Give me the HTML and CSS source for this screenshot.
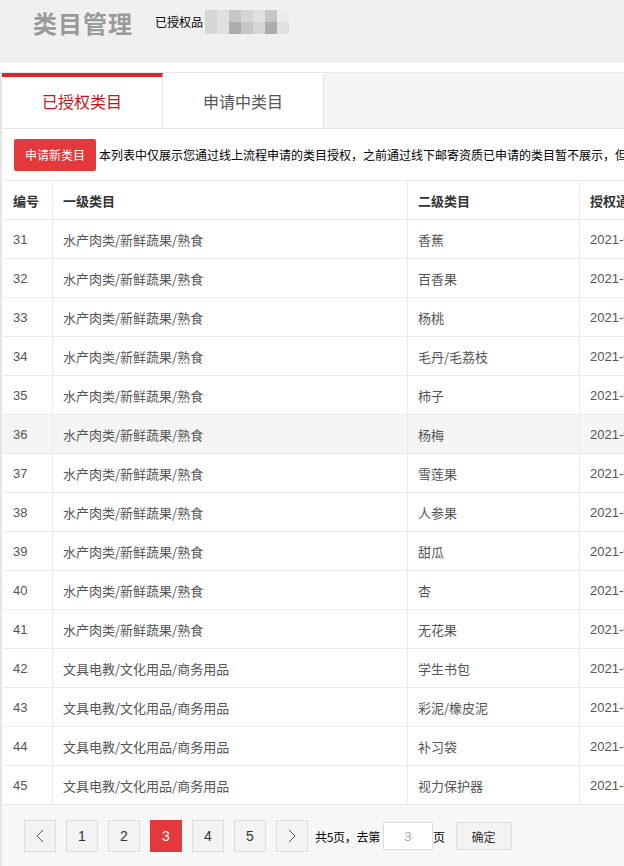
FILE: index.html
```html
<!DOCTYPE html>
<html lang="zh-CN">
<head>
    <meta charset="UTF-8">
    <title>类目管理</title>
    <link rel="stylesheet" href="styles.css">
</head>
<body>
    <div class="top-bar">
        <h1>类目管理</h1>
        <span class="crumb">已授权品</span>
        <span class="mosaic">
            <i class="m2"></i><i class="m1"></i><i class="m3"></i><i class="m2"></i><i class="m1"></i><i class="m3"></i><i class="m0"></i>
            <i class="m2"></i><i class="m1"></i><i class="m4"></i><i class="m3"></i><i class="m2"></i><i class="m4"></i><i class="m1"></i>
        </span>
    </div>

    <div class="panel">
        <ul class="tabs">
            <li class="tab active">已授权类目</li>
            <li class="tab">申请中类目</li>
        </ul>

        <div class="toolbar">
            <button class="btn-red">申请新类目</button>
            <span class="notice">本列表中仅展示您通过线上流程申请的类目授权，之前通过线下邮寄资质已申请的类目暂不展示，但不影响您的正常经营</span>
        </div>

        <div class="table-wrap">
            <table class="cat-table">
                <thead>
                    <tr>
                        <th class="col-no">编号</th>
                        <th class="col-one">一级类目</th>
                        <th class="col-two">二级类目</th>
                        <th class="col-date">授权通过时间</th>
                    </tr>
                </thead>
                <tbody id="rows"></tbody>
            </table>
        </div>

        <div class="pager">
            <button class="pg"><svg width="8" height="14" viewBox="0 0 8 14"><path d="M7 1 1 7l6 6" fill="none" stroke="#555" stroke-width="1"/></svg></button>
            <button class="pg">1</button>
            <button class="pg">2</button>
            <button class="pg current">3</button>
            <button class="pg">4</button>
            <button class="pg">5</button>
            <button class="pg"><svg width="8" height="14" viewBox="0 0 8 14"><path d="M1 1l6 6-6 6" fill="none" stroke="#555" stroke-width="1"/></svg></button>
            <span class="pg-text">共5页，去第</span>
            <input class="pg-input" type="text" value="3">
            <span class="pg-text">页</span>
            <button class="pg-ok">确定</button>
        </div>
    </div>

    <script>
        const fresh = '水产肉类/新鲜蔬果/熟食';
        const office = '文具电教/文化用品/商务用品';
        const data = [
            [31, fresh, '香蕉'], [32, fresh, '百香果'], [33, fresh, '杨桃'],
            [34, fresh, '毛丹/毛荔枝'], [35, fresh, '柿子'], [36, fresh, '杨梅'],
            [37, fresh, '雪莲果'], [38, fresh, '人参果'], [39, fresh, '甜瓜'],
            [40, fresh, '杏'], [41, fresh, '无花果'], [42, office, '学生书包'],
            [43, office, '彩泥/橡皮泥'], [44, office, '补习袋'], [45, office, '视力保护器']
        ];
        const tbody = document.getElementById('rows');
        data.forEach(function (d) {
            const tr = document.createElement('tr');
            if (d[0] === 36) tr.className = 'hover';
            tr.innerHTML = '<td class="num">' + d[0] + '</td><td>' + d[1] + '</td><td>' + d[2] +
                '</td><td class="num">2021-03-15 10:24:36</td>';
            tbody.appendChild(tr);
        });
    </script>
</body>
</html>
```

FILE: styles.css
```css
body {
    margin: 0;
    background: #fff;
    font-family: "Noto Sans CJK SC", "Liberation Sans", sans-serif;
    color: #333;
    overflow: hidden;
}
.top-bar {
    height: 61px;
    background: #f0f0f0;
    border-bottom: 1px solid #e6e6e6;
    display: flex;
    align-items: center;
    padding-left: 33px;
    margin-bottom: 10px;
}
.top-bar h1 {
    margin: 0 22px 0 0;
    font-size: 24px;
    font-weight: bold;
    color: #9a9a9a;
    letter-spacing: 1px;
    position: relative;
    top: -8px;
}
.crumb {
    font-size: 12px;
    color: #000;
    position: relative;
    top: -9px;
}
.mosaic {
    display: grid;
    grid-template-columns: repeat(7, 12px);
    grid-auto-rows: 12px;
    position: relative;
    top: -9px;
    margin-left: 2px;
}
.mosaic i { display: block; }
.m0 { background: #ececec; }
.m1 { background: #e0e0e0; }
.m2 { background: #d6d6d6; }
.m3 { background: #c6c6c6; }
.m4 { background: #acacac; }

.panel {
    border-left: 2px solid #e6e6e6;
    border-top: 1px solid #e8e8e8;
}
.tabs {
    list-style: none;
    margin: 0;
    padding: 0;
    display: flex;
    height: 55px;
    background: #f5f5f5;
    border-bottom: 1px solid #e8e8e8;
}
.tab {
    width: 161px;
    box-sizing: border-box;
    background: #fff;
    border-right: 1px solid #e8e8e8;
    border-top: 4px solid #fff;
    font-size: 16px;
    color: #555;
    display: flex;
    align-items: center;
    justify-content: center;
    padding-bottom: 3px;
}
.tab.active {
    color: #c0161c;
    border-top-color: #d9262d;
}

.toolbar {
    display: flex;
    align-items: center;
    height: 51px;
    padding-left: 12px;
    white-space: nowrap;
    overflow: hidden;
}
.btn-red {
    height: 32px;
    padding: 0 11px;
    border: none;
    border-radius: 2px;
    background: #e4393c;
    color: #fff;
    font-family: inherit;
    font-size: 12px;
    margin-right: 3px;
}
.notice {
    font-size: 12px;
    color: #000;
}

.table-wrap {
    overflow: hidden;
    padding-left: 1px;
}
.cat-table {
    width: 900px;
    border-collapse: collapse;
    font-size: 13px;
}
.cat-table th,
.cat-table td {
    height: 38px;
    padding: 0 10px;
    text-align: left;
    border: 1px solid #ebebeb;
    border-left: none;
}
.cat-table th {
    color: #333;
    font-weight: bold;
}
.cat-table td {
    color: #555;
}
.cat-table td.num {
    font-family: "Liberation Sans", sans-serif;
    font-size: 13px;
}
.cat-table tr.hover td { background: #f5f5f5; }
.col-no { width: 29px; }
.col-one { width: 334px; }
.col-two { width: 151px; }

.pager {
    background: #f7f7f7;
    height: 62px;
    display: flex;
    align-items: center;
    padding-left: 22px;
}
.pg {
    width: 32px;
    height: 32px;
    margin-right: 10px;
    border: 1px solid #ddd;
    background: #f3f3f3;
    color: #333;
    font-family: "Liberation Sans", sans-serif;
    font-size: 14px;
    padding: 0;
    display: flex;
    align-items: center;
    justify-content: center;
}
.pg.current {
    background: #e4393c;
    border-color: #e4393c;
    color: #fff;
}
.pg-text {
    font-size: 12px;
    color: #000;
    margin-left: -3px;
    letter-spacing: -0.3px;
}
.pg-input {
    width: 48px;
    height: 26px;
    margin: 0 3px 0 3px;
    padding: 0;
    border: 1px solid #ddd;
    text-align: center;
    color: #aaa;
    font-size: 13px;
    font-family: "Liberation Sans", sans-serif;
}
.pg-ok {
    margin-left: 11px;
    width: 56px;
    height: 28px;
    border: 1px solid #ddd;
    background: #f3f3f3;
    font-family: inherit;
    font-size: 12px;
    color: #333;
}
```
